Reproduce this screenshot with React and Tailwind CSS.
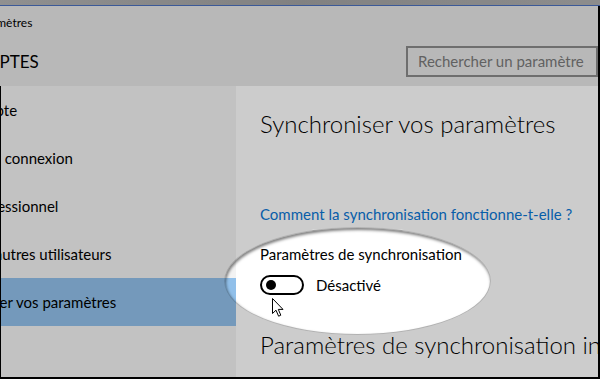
import React from "react";

const NAV = [
  "Votre compte",
  "Options de connexion",
  "Accès professionnel",
  "Famille et autres utilisateurs",
  "Synchroniser vos paramètres",
];

function Cursor() {
  return (
    <svg width="12" height="19" viewBox="0 0 12 19" className="block">
      <path
        d="M0.5 0.5 L0.5 15.5 L4 12.2 L6.6 18.2 L8.8 17.2 L6.3 11.4 L11 11.4 Z"
        fill="#fff"
        stroke="#000"
        strokeWidth="1"
        strokeLinejoin="miter"
      />
    </svg>
  );
}

export default function App() {
  return (
    <div className="relative w-[600px] h-[379px] overflow-hidden bg-white font-['Lato','Noto_Sans',sans-serif] text-black">
      {/* bande du bureau + liseré bleu */}
      <div className="h-[5px] bg-gradient-to-r from-[#b4b4b4] via-[#a2a2a2] to-[#b0b0b0]" />
      <div className="h-[1px] bg-[#4a70be]" />

      <div className="flex flex-col h-[373px] border-r-2 border-b-2 border-black">
        {/* en-tête */}
        <div className="h-[80px] bg-[#e7e7e7] flex flex-col overflow-hidden">
          <div className="h-[32px] flex items-center text-[12px] -ml-[27px] pt-[1px]">Paramètres</div>
          <div className="mt-[8px] flex items-center justify-between">
            <div className="text-[17px] -ml-[41px] pt-[1px]">COMPTES</div>
            <div className="w-[192px] h-[31px] border-2 border-[#8a8a8a] flex items-center pl-[10px] text-[15px] text-[#7a7a7a] shrink-0 whitespace-nowrap overflow-hidden">
              Rechercher un paramètre
            </div>
          </div>
        </div>

        <div className="flex flex-1 min-h-0">
          {/* menu latéral */}
          <div className="w-[236px] bg-[#f3f3f3] border-l border-black overflow-hidden">
            {NAV.map((label, i) => (
              <div
                key={label}
                className={`h-[48px] flex items-center text-[15px] whitespace-nowrap ${i === 4 ? "bg-[#91c0ea]" : ""}`}
              >
                <span className="-ml-[73px]">{label}</span>
              </div>
            ))}
          </div>

          {/* contenu */}
          <div className="flex-1 bg-white pl-[24px] overflow-hidden whitespace-nowrap">
            <div className="mt-[22px] h-[34px] text-[24px] font-light leading-[32px]">Synchroniser vos paramètres</div>
            <div className="mt-[62px] h-[20px] leading-[20px] text-[15px] text-[#0a76d4]">
              Comment la synchronisation fonctionne-t-elle ?
            </div>
            <div className="mt-[20px] h-[20px] leading-[20px] text-[15px]">Paramètres de synchronisation</div>
            <div className="mt-[10px] flex items-center gap-[12px]">
              <div className="w-[44px] h-[20px] rounded-full border-2 border-black flex items-center pl-[4px]">
                <div className="w-[10px] h-[10px] rounded-full bg-black" />
              </div>
              <span className="text-[15px]">Désactivé</span>
            </div>
            <div className="mt-[31px] h-[34px] text-[24px] font-light leading-[34px]">
              Paramètres de synchronisation intelligente
            </div>
          </div>
        </div>
      </div>

      {/* projecteur : voile sombre avec trou elliptique */}
      <div className="pointer-events-none absolute left-[224px] top-[227px] w-[267px] h-[108px] rounded-[50%] border border-[rgba(0,0,0,0.3)] shadow-[inset_1px_2px_3px_rgba(0,0,0,0.5),0_0_0_1200px_rgba(0,0,0,0.2)]" />

      {/* curseur */}
      <div className="absolute left-[272px] top-[298px]">
        <Cursor />
      </div>
    </div>
  );
}
